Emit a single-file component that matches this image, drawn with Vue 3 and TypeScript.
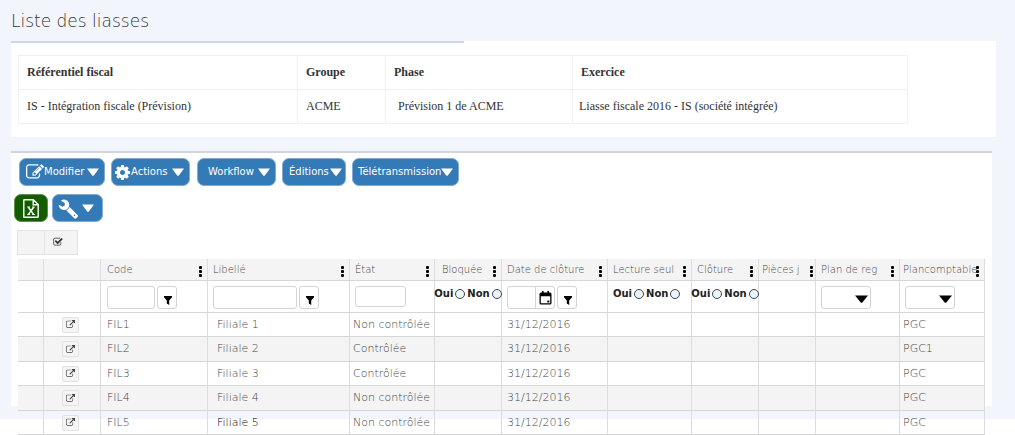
<script setup lang="ts">
import { ref } from 'vue'

interface Column {
  key: string
  label: string
  width: number
  filter: 'text' | 'plain' | 'radio' | 'date' | 'select' | 'none'
}

interface Row {
  code: string
  libelle: string
  etat: string
  date: string
  plan: string
  current?: boolean
}

const columns: Column[] = [
  { key: 'code', label: 'Code', width: 107, filter: 'text' },
  { key: 'libelle', label: 'Libellé', width: 142, filter: 'text' },
  { key: 'etat', label: 'État', width: 85, filter: 'plain' },
  { key: 'bloquee', label: 'Bloquée', width: 67, filter: 'radio' },
  { key: 'date', label: 'Date de clôture', width: 106, filter: 'date' },
  { key: 'lecture', label: 'Lecture seul', width: 84, filter: 'radio' },
  { key: 'cloture', label: 'Clôture', width: 67, filter: 'radio' },
  { key: 'pieces', label: 'Pièces j', width: 57, filter: 'none' },
  { key: 'reg', label: 'Plan de reg', width: 84, filter: 'select' },
  { key: 'plan', label: 'Plancomptable', width: 85, filter: 'select' },
]

const rows: Row[] = [
  { code: 'FIL1', libelle: 'Filiale 1', etat: 'Non contrôlée', date: '31/12/2016', plan: 'PGC' },
  { code: 'FIL2', libelle: 'Filiale 2', etat: 'Contrôlée', date: '31/12/2016', plan: 'PGC1' },
  { code: 'FIL3', libelle: 'Filiale 3', etat: 'Contrôlée', date: '31/12/2016', plan: 'PGC' },
  { code: 'FIL4', libelle: 'Filiale 4', etat: 'Non contrôlée', date: '31/12/2016', plan: 'PGC' },
  { code: 'FIL5', libelle: 'Filiale 5', etat: 'Non contrôlée', date: '31/12/2016', plan: 'PGC', current: true },
]

const filters = ref<Record<string, string>>({})

function cell(row: Row, key: string): string {
  return (row as unknown as Record<string, string>)[key] ?? ''
}
</script>

<template>
  <main class="page">
    <h1 class="title">Liste des liasses</h1>

    <section class="panel summary">
      <table class="info">
        <colgroup>
          <col class="i1" /><col class="i2" /><col class="i3" /><col class="i4" />
        </colgroup>
        <thead>
          <tr><th>Référentiel fiscal</th><th>Groupe</th><th>Phase</th><th>Exercice</th></tr>
        </thead>
        <tbody>
          <tr>
            <td>IS - Intégration fiscale (Prévision)</td>
            <td>ACME</td>
            <td class="phase">Prévision 1 de ACME</td>
            <td class="exercice">Liasse fiscale 2016 - IS (société intégrée)</td>
          </tr>
        </tbody>
      </table>
    </section>

    <section class="panel list">
      <div class="toolbar">
        <button type="button" class="btn modify">
          <svg class="ico18" viewBox="0 0 1792 1792"><path d="M888 1184l116-116-152-152-116 116v56h96v96h56zm440-720q-16-16-33 1l-350 350q-17 17-1 33t33-1l350-350q17-17 1-33zm80 594v190q0 119-84.5 203.5t-203.5 84.5h-832q-119 0-203.5-84.5t-84.5-203.5v-832q0-119 84.5-203.5t203.5-84.5h832q63 0 117 25 15 7 18 23 3 17-9 29l-49 49q-14 14-32 8-23-6-45-6h-832q-66 0-113 47t-47 113v832q0 66 47 113t113 47h832q66 0 113-47t47-113v-126q0-13 9-22l64-64q15-15 35-7t20 29zm-96-738l288 288-672 672h-288v-288zm444 132l-92 92-288-288 92-92q28-28 68-28t68 28l152 152q28 28 28 68t-28 68z" /></svg>
          <span>Modifier</span>
          <svg class="caret" viewBox="0 0 12 8"><path d="M0 .5h12L7 7.2q-1 1-2 0z" /></svg>
        </button>
        <button type="button" class="btn actions">
          <svg class="ico16" viewBox="128 128 1536 1536"><path d="M1152 896q0-106-75-181t-181-75-181 75-75 181 75 181 181 75 181-75 75-181zm512-109v222q0 12-8 23t-20 13l-185 28q-19 54-39 91 35 50 107 138 10 12 10 25t-9 23q-27 37-99 108t-94 71q-12 0-26-9l-138-108q-44 23-91 38-16 136-29 186-7 28-36 28h-222q-14 0-24.5-8.5t-11.5-21.5l-28-184q-49-16-90-37l-141 107q-10 9-25 9-14 0-25-11-126-114-165-168-7-10-7-23 0-12 8-23 15-21 51-66.5t54-70.5q-27-50-41-99l-183-27q-13-2-21-12.5t-8-23.5v-222q0-12 8-23t19-13l186-28q14-46 39-92-40-57-107-138-10-12-10-24 0-10 9-23 26-36 98.5-107.5t94.5-71.5q13 0 26 10l138 107q44-23 91-38 16-136 29-186 7-28 36-28h222q14 0 24.5 8.5t11.5 21.5l28 184q49 16 90 37l142-107q9-9 24-9 13 0 25 10 129 119 165 170 7 8 7 22 0 12-8 23-15 21-51 66.5t-54 70.5q26 50 41 98l183 28q13 2 21 12.5t8 23.5z" /></svg>
          <span>Actions</span>
          <svg class="caret" viewBox="0 0 12 8"><path d="M0 .5h12L7 7.2q-1 1-2 0z" /></svg>
        </button>
        <button type="button" class="btn workflow">
          <span>Workflow</span>
          <svg class="caret" viewBox="0 0 12 8"><path d="M0 .5h12L7 7.2q-1 1-2 0z" /></svg>
        </button>
        <button type="button" class="btn editions">
          <span>Éditions</span>
          <svg class="caret" viewBox="0 0 12 8"><path d="M0 .5h12L7 7.2q-1 1-2 0z" /></svg>
        </button>
        <button type="button" class="btn teletrans">
          <span>Télétransmission</span>
          <svg class="caret" viewBox="0 0 12 8"><path d="M0 .5h12L7 7.2q-1 1-2 0z" /></svg>
        </button>
      </div>

      <div class="tools">
        <button type="button" class="btn excel" aria-label="Excel">
          <svg class="file" viewBox="0 0 16 19" fill="none" stroke="#fff" stroke-width="1.4">
            <path d="M.8 1.2q0-.5.5-.5h9L15.200 5.600v12.200q0 .5-.5.5H1.300q-.5 0-.5-.5zM10.200.800v5h5" />
            <path d="M5.400 8.200l5.200 7.200M10.600 8.200l-5.200 7.200" stroke-width="1.500" />
            <path d="M4.200 8h2.800M9.200 8h2.600M4.200 15.500h2.800M9.200 15.500h2.600" stroke-width="1" />
          </svg>
        </button>
        <button type="button" class="btn wrench" aria-label="Configuration">
          <svg class="ico21" viewBox="0 0 1792 1792"><path transform="matrix(-1 0 0 1 1792 0)" d="M448 1472q0-26-19-45t-45-19-45 19-19 45 19 45 45 19 45-19 19-45zm644-420l-682 682q-37 37-90 37-52 0-91-37l-106-108q-38-36-38-90 0-53 38-91l681-681q39 98 114.500 173.500t173.500 114.500zm634-435q0 39-23 106-47 134-164.500 217.500t-258.500 83.500q-185 0-316.500-131.500t-131.500-316.500 131.500-316.500 316.500-131.500q58 0 121.500 16.500t107.500 46.500q16 11 16 28t-16 28l-293 169v224l193 107q5-3 79-48.500t135.500-81 70.500-35.500q15 0 23.500 10t8.500 25z" /></svg>
          <svg class="caret" viewBox="0 0 12 8"><path d="M0 .5h12L7 7.200q-1 1-2 0z" /></svg>
        </button>
      </div>

      <div class="select-strip">
        <span class="strip-blank"></span>
        <button type="button" class="strip-check" aria-label="Tout sélectionner">
          <svg class="ico10" viewBox="0 0 1792 1792"><path d="M1472 930v318q0 119-84.5 203.5t-203.5 84.5h-832q-119 0-203.5-84.5t-84.5-203.5v-832q0-119 84.5-203.5t203.5-84.5h832q63 0 117 25 15 7 18 23 3 17-9 29l-49 49q-10 10-23 10-3 0-9-2-23-6-45-6h-832q-66 0-113 47t-47 113v832q0 66 47 113t113 47h832q66 0 113-47t47-113v-254q0-13 9-22l64-64q10-10 23-10 6 0 12 3 20 8 20 29zm231-489l-814 814q-24 24-57 24t-57-24l-430-430q-24-24-24-57t24-57l110-110q24-24 57-24t57 24l263 263 647-647q24-24 57-24t57 24l110 110q24 24 24 57t-24 57z" /></svg>
        </button>
      </div>

      <table class="grid">
        <colgroup>
          <col class="g-mark" /><col class="g-open" />
          <col v-for="c in columns" :key="c.key" :style="{ width: c.width + 'px' }" />
        </colgroup>
        <thead>
          <tr class="head">
            <th></th>
            <th></th>
            <th v-for="c in columns" :key="c.key" :class="c.key">
              <div class="head-cell">
                <span class="label">{{ c.label }}</span>
                <button type="button" class="dots" :aria-label="'Menu ' + c.label"><i></i><i></i><i></i></button>
              </div>
            </th>
          </tr>
          <tr class="filters">
            <td></td>
            <td></td>
            <td v-for="c in columns" :key="c.key" :class="c.key">
              <div v-if="c.filter === 'radio'" class="radios">
                <label>Oui <input v-model="filters[c.key]" type="radio" :name="c.key" value="oui" /></label>
                <label>Non <input v-model="filters[c.key]" type="radio" :name="c.key" value="non" /></label>
              </div>
              <div v-else-if="c.filter === 'select'" class="picker">
                <select v-model="filters[c.key]" :aria-label="c.label"><option value=""></option></select>
                <svg class="arrow" viewBox="0 0 13 8"><path d="M0 .5h13L7.500 7.200q-1 1-2 0z" /></svg>
              </div>
              <div v-else-if="c.filter !== 'none'" class="field">
                <div v-if="c.filter === 'date'" class="date-box">
                  <input v-model="filters[c.key]" type="text" :aria-label="c.label" />
                  <button type="button" aria-label="Calendrier">
                    <svg class="cal" viewBox="0 0 13 14"><path fill-rule="evenodd" d="M2 1.500h1V0h1.600v1.500h3.800V0H10v1.500h1q1.500 0 1.500 1.500v9q0 1.500-1.500 1.500H2Q.5 13.500.5 12V3Q.5 1.500 2 1.500zM1.800 5.200v6.600q0 .5.5.5h8.400q.5 0 .5-.5V5.200zM8.300 9.600h2v2h-2z" /></svg>
                  </button>
                </div>
                <input v-else v-model="filters[c.key]" type="text" :aria-label="c.label" />
                <button v-if="c.filter !== 'plain'" type="button" class="funnel" :aria-label="'Filtrer ' + c.label">
                  <svg viewBox="0 0 8 9"><path d="M0 0h8v1.200L5.200 4.500V9L2.800 7.400V4.500L0 1.200z" /></svg>
                </button>
              </div>
            </td>
          </tr>
        </thead>
        <tbody>
          <tr v-for="r in rows" :key="r.code" :class="{ current: r.current }">
            <td></td>
            <td class="open">
              <button type="button" :aria-label="'Ouvrir ' + r.code">
                <svg viewBox="0 0 1792 1792"><path d="M1408 928v320q0 119-84.5 203.5t-203.5 84.5h-832q-119 0-203.5-84.5t-84.5-203.5v-832q0-119 84.5-203.5t203.5-84.5h704q14 0 23 9t9 23v64q0 14-9 23t-23 9h-704q-66 0-113 47t-47 113v832q0 66 47 113t113 47h832q66 0 113-47t47-113v-320q0-14 9-23t23-9h64q14 0 23 9t9 23zm384-864v512q0 26-19 45t-45 19-45-19l-176-176-652 652q-10 10-23 10t-23-10l-114-114q-10-10-10-23t10-23l652-652-176-176q-19-19-19-45t19-45 45-19h512q26 0 45 19t19 45z" /></svg>
              </button>
            </td>
            <td v-for="c in columns" :key="c.key" :class="c.key">{{ cell(r, c.key) }}</td>
          </tr>
        </tbody>
      </table>
    </section>
  </main>
</template>

<style>
body {
  margin: 0;
  background: #fff;
}
</style>

<style scoped>
* {
  box-sizing: border-box;
}
.page {
  display: flow-root;
  padding: 0 19px 30px 11px;
  background: linear-gradient(#f2f5fb, #f2f5fb) no-repeat;
  background-size: 100% calc(100% - 17px);
  font-family: "DejaVu Sans", sans-serif;
}
.title {
  margin: 0;
  padding-top: 9px;
  height: 41px;
  font-size: 17px;
  line-height: 24px;
  font-weight: 200;
  color: #333;
}
.panel {
  background: #fff;
}
.summary {
  padding: 0 7px 13px;
}
.summary::before {
  content: "";
  display: block;
  width: calc(46% + 6px);
  height: 2px;
  margin: 0 0 12px -7px;
  background: #d0d5de;
}
.info {
  width: calc(100% - 81px);
  table-layout: fixed;
  border-collapse: collapse;
  font-family: "Liberation Serif", serif;
  font-size: 12px;
  line-height: 16px;
  color: #333;
}
.i1 { width: 279px; }
.i2 { width: 88px; }
.i3 { width: 187px; }
.i4 { width: 335px; }
.info th,
.info td {
  height: 34px;
  padding: 0 8px 2px;
  border: 1px solid #f0f0f0;
  text-align: left;
}
.info .phase { padding-left: 12px; }
.info .exercice { padding-left: 6px; }

.list {
  display: flow-root;
  margin: 14px 4px 0 0;
  padding: 5px 7px 0 7px;
  border-top: 2px solid #d0d5de;
}
button {
  margin: 0;
  padding: 0;
  border: 0;
  background: none;
  font: inherit;
  color: inherit;
}
svg {
  display: block;
  flex: none;
  fill: currentColor;
}
.toolbar,
.tools {
  display: flex;
  gap: 6px;
  height: 28px;
}
.toolbar { padding-left: 1px; }
.tools {
  gap: 4px;
  margin: 8px 0 0 -4px;
}
.btn {
  display: flex;
  align-items: center;
  height: 28px;
  padding: 0 5px;
  border: 1px solid #7fabd3;
  border-radius: 7px;
  background: #337ab7;
  color: #fff;
  font-size: 10px;
  line-height: 14px;
}
.modify { width: 86px; padding-left: 6px; }
.actions { width: 79px; padding-left: 3px; gap: 1px; }
.workflow { width: 79px; padding-left: 10px; margin-left: 1px; }
.editions { width: 64px; padding: 0 3px 0 6px; }
.teletrans { width: 107px; }
.excel {
  width: 34px;
  justify-content: center;
  background: #145c00;
  border-color: #5d9150;
}
.wrench { width: 51px; padding: 0 8px 0 5px; }
.caret { width: 12px; height: 8px; margin-left: auto; }
.ico18 { width: 18px; height: 18px; }
.ico16 { width: 15px; height: 15px; }
.ico21 { width: 21px; height: 21px; }
.ico10 { width: 10px; height: 10px; }
.file { width: 16px; height: 19px; fill: none; }

.select-strip {
  display: flex;
  width: 61px;
  height: 25px;
  margin: 8px 0 4px -1px;
  border: 1px solid #e3e3e3;
  background: #f4f4f4;
  color: #333;
}
.strip-blank {
  width: 27px;
  border-right: 1px solid #e3e3e3;
}
.strip-check { padding: 0 0 2px 8px; }

.grid {
  width: 100%;
  margin-bottom: -29px;
  table-layout: fixed;
  border-collapse: separate;
  border-spacing: 0;
  font-size: 11px;
  line-height: 14px;
  font-weight: 200;
  color: #444;
}
.g-mark { width: 26px; }
.g-open { width: 57px; }
.grid th,
.grid td {
  padding: 0 0 0 5px;
  border-right: 1px solid #dcdcdc;
  border-bottom: 1px solid #d6d6d6;
  text-align: left;
  font-weight: 200;
  white-space: nowrap;
}
.grid .code { padding-left: 6px; }
.head th {
  height: 22px;
  background: #f4f4f4;
  font-size: 10px;
}
.head-cell {
  display: flex;
  align-items: center;
  justify-content: space-between;
  padding-right: 5px;
}
.label {
  flex: 1 1 0;
  min-width: 0;
}
.head .bloquee { padding-left: 7px; }
.head .pieces,
.head .plan { padding-left: 3px; }
.head .pieces .head-cell { padding-right: 2px; }
.dots {
  display: flex;
  flex-direction: column;
  gap: 1px;
  padding-top: 3px;
}
.dots i {
  width: 3px;
  height: 3px;
  border-radius: 1px;
  background: #000;
}
.grid .filters td {
  height: 32px;
  padding-top: 5px;
  vertical-align: top;
  background: #fff;
}
.field {
  display: flex;
  gap: 2px;
}
input[type="text"],
select,
.funnel,
.date-box {
  height: 23px;
  padding: 0;
  border: 1px solid #d4d4d4;
  border-radius: 3px;
  background: #fff;
}
.code input[type="text"] { width: 48px; }
.libelle input[type="text"] { width: 84px; }
.etat input[type="text"] { width: 51px; height: 21px; }
.funnel {
  display: flex;
  justify-content: center;
  width: 20px;
  padding: 9px 0 0 2px;
  color: #000;
}
.funnel svg { width: 8px; height: 9px; }
.date-box {
  display: flex;
  width: 48px;
}
.date-box input[type="text"] {
  flex: 1;
  min-width: 0;
  height: 21px;
  border: 0;
}
.date-box button {
  width: 19px;
  padding-left: 3px;
  border-left: 1px solid #d4d4d4;
  color: #000;
}
.cal { width: 13px; height: 14px; }
.radios {
  display: flex;
  justify-content: center;
  gap: 2px;
  padding-top: 2px;
  font-size: 10px;
  line-height: 12px;
  font-weight: 700;
  color: #222;
}
.grid .filters .bloquee,
.grid .filters .cloture { padding-left: 0; }
.lecture .radios { justify-content: flex-start; }
.radios label {
  display: flex;
  align-items: center;
  gap: 2px;
}
.radios input {
  appearance: none;
  flex: none;
  width: 10px;
  height: 10px;
  margin: 0;
  border: 1px solid #444;
  border-radius: 50%;
  background: #eaf4fd;
}
.picker {
  position: relative;
  width: 50px;
}
.picker select {
  display: block;
  appearance: none;
  width: 100%;
}
.arrow {
  position: absolute;
  right: 3px;
  top: 9px;
  width: 13px;
  height: 8px;
  color: #000;
  pointer-events: none;
}
.grid tbody td { height: 24px; }
.grid tbody tr { background: #fff; }
.grid tbody tr:nth-child(even) { background: #f4f4f4; }
.grid tbody tr:nth-child(even) td { height: 25px; }
.grid tbody tr.current { background: transparent; }
.grid tbody .libelle { padding-left: 9px; }
.grid tbody .etat,
.grid tbody .plan { padding-left: 3px; }
.current .libelle { color: #000; }
.grid tbody .open { padding-left: 18px; }
.open button {
  display: flex;
  align-items: center;
  justify-content: center;
  width: 17px;
  height: 16px;
  border: 1px solid #e2e2e2;
  border-radius: 2px;
  background: #f5f5f5;
  color: #444;
}
.open svg { width: 9px; height: 9px; }
</style>
